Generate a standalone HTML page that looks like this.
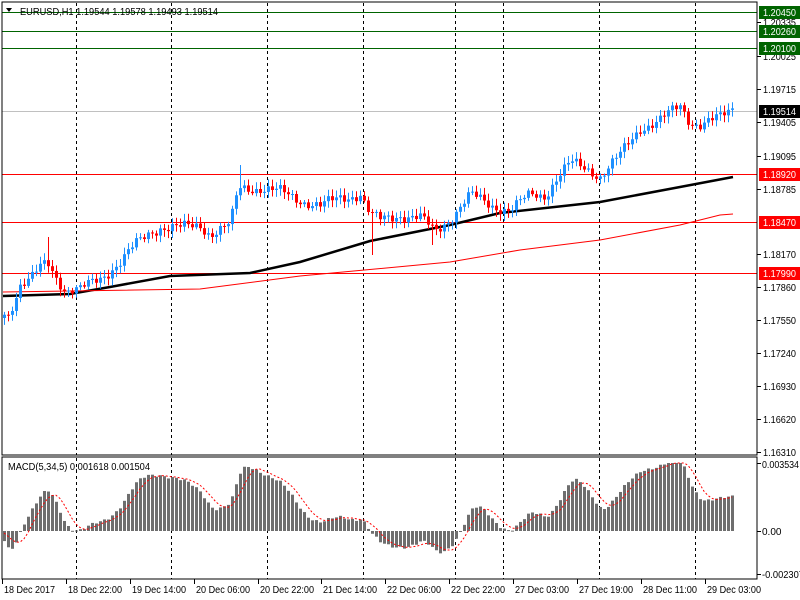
<!DOCTYPE html>
<html><head><meta charset="utf-8"><style>
html,body{margin:0;padding:0;background:#fff;width:800px;height:600px;overflow:hidden}
svg{display:block}
text{font-family:"Liberation Sans",sans-serif;font-size:10px;fill:#000}
</style></head><body>
<svg id="s" width="800" height="600" xmlns="http://www.w3.org/2000/svg">
<rect x="0" y="0" width="800" height="600" fill="#fff"/>
<g id="g"></g>
<rect x="2" y="2" width="755" height="453" fill="none" stroke="#000" stroke-width="1"/>
<rect x="2" y="457" width="755" height="122" fill="none" stroke="#000" stroke-width="1"/>
<text x="20" y="15" textLength="198" lengthAdjust="spacingAndGlyphs">EURUSD,H1  1.19544 1.19578 1.19493 1.19514</text>
<path d="M6 8 L12 8 L9 12 Z" fill="#000"/>
<text x="8" y="470" textLength="142" lengthAdjust="spacingAndGlyphs">MACD(5,34,5) 0.001618 0.001504</text>
</svg>
<script>
var g=document.getElementById('g'),h='';
function L(x1,y1,x2,y2,c,w,d){h+='<line x1="'+x1+'" y1="'+y1+'" x2="'+x2+'" y2="'+y2+'" stroke="'+c+'" stroke-width="'+(w||1)+'"'+(d?' stroke-dasharray="'+d+'"':'')+'/>';}
function R(x,y,w,hh,c){h+='<rect x="'+x+'" y="'+y+'" width="'+w+'" height="'+hh+'" fill="'+c+'"/>';}
function T(x,y,t,c,len){h+='<text x="'+x+'" y="'+y+'"'+(c?' style="fill:'+c+'"':'')+(len?' textLength="'+len+'" lengthAdjust="spacingAndGlyphs"':'')+'>'+t+'</text>';}
[76,171,267,363,455,503,599,695].forEach(function(x){L(x+.5,3,x+.5,455,'#000',1,'3,3');L(x+.5,458,x+.5,579,'#000',1,'3,3');});
[[12,'#006400'],[31,'#006400'],[48,'#006400'],[174,'#f00'],[222,'#f00'],[273,'#f00']].forEach(function(l){L(2,l[0]+.5,757,l[0]+.5,l[1],1);});
L(2,111.5,757,111.5,'#c0c0c0',1);
var K=[[2,312],[8,314],[20,285],[30,280],[40,268],[47,262],[55,275],[65,290],[80,290],[100,278],[120,262],[135,245],[150,232],[160,227],[180,228],[200,225],[210,234],[230,225],[238,188],[260,188],[280,192],[300,200],[320,206],[340,198],[360,194],[370,215],[380,220],[400,215],[420,218],[435,232],[450,218],[470,195],[490,205],[510,210],[530,195],[545,195],[555,180],[570,163],[590,170],[600,176],[620,155],[640,128],[660,120],[680,106],[690,122],[700,124],[720,118],[733,108]];
function interp(x){for(var i=0;i<K.length-1;i++){if(x<=K[i+1][0]){var t=(x-K[i][0])/(K[i+1][0]-K[i][0]);return K[i][1]+t*(K[i+1][1]-K[i][1]);}}return K[K.length-1][1];}
var xs=[],cl=[];for(var x=4;x<=733;x+=4){xs.push(x);cl.push(interp(x)+4*Math.sin(x*1.7)+3*Math.sin(x*0.53+1));}
function poly(P,c,w){h+='<polyline fill="none" stroke="'+c+'" stroke-width="'+w+'" points="'+P.map(function(p){return p.join(',')}).join(' ')+'"/>';}
poly([[3,296],[70,294],[110,287],[170,276],[250,273],[300,262],[370,241],[450,225],[500,213],[600,202],[680,187],[733,177]],'#000',2.5);
poly([[3,292],[200,289],[300,276],[450,262],[520,250],[600,240],[680,225],[720,215],[733,214]],'#f00',1);
var prev=318;
for(var i=0;i<xs.length;i++){var o=prev,c=cl[i],x=xs[i];var hi=Math.min(o,c)-2-Math.abs(5*Math.sin(x*3.1)),lo=Math.max(o,c)+2+Math.abs(5*Math.cos(x*2.3));
if(x==48)hi=237;if(x==240)hi=165;if(x==372)lo=255;if(x==432)lo=245;
var col=c<=o?'#1e90ff':'#f00';L(x+.5,hi,x+.5,lo,col,1);var t=Math.min(o,c),b=Math.max(o,c);if(b-t<1)b=t+1;R(x-1,t,3,b-t,col);prev=c;}
var data=[];for(var k=0;k<34;k++)data.push(296);data=data.concat(cl);
function ema(a,n){var r=[],al=2/(n+1),e=a[0];for(var i=0;i<a.length;i++){e=i?e+al*(a[i]-e):a[i];r.push(e);}return r;}
var e5=ema(data,5),e34=ema(data,34),m=[];for(var i=0;i<data.length;i++)m.push((e34[i]-e5[i])*1.95);
var sig=[];for(var i=0;i<m.length;i++){var s=0,n=0;for(var j=Math.max(0,i-4);j<=i;j++){s+=m[j];n++;}sig.push(s/n);}
var sp=[];for(var i=0;i<xs.length;i++){var v=m[i+34],y=531-v;y=Math.max(463,Math.min(578,y));R(xs[i]-1,Math.min(y,531),3,Math.max(1,Math.abs(531-y)),'#6e6e6e');sp.push([xs[i],Math.max(463,531-sig[i+34])]);}
h+='<polyline fill="none" stroke="#f00" stroke-width="1" stroke-dasharray="2,2" points="'+sp.map(function(p){return p.join(',')}).join(' ')+'"/>';
[[1.20335,22],[1.20025,56],[1.19715,89],[1.19405,122],[1.19095,156],[1.18785,189],[1.18170,254],[1.17860,287],[1.17550,320],[1.17240,353],[1.16930,386],[1.16620,419],[1.16310,452]].forEach(function(p){L(757,p[1]+.5,761,p[1]+.5,'#000');T(763,p[1]+4,p[0].toFixed(5),0,33);});
[[1.20450,12,'#006400'],[1.20260,31,'#006400'],[1.20100,48,'#006400'],[1.19514,111,'#000'],[1.18920,174,'#f00'],[1.18470,222,'#f00'],[1.17990,273,'#f00']].forEach(function(p){R(759,p[1]-6,41,13,p[2]);T(763,p[1]+4,p[0].toFixed(5),'#fff',33);});
L(757,463.5,761,463.5,'#000');T(762,468,'0.003534',0,37);L(757,531.5,761,531.5,'#000');T(762,535,'0.00');L(757,574.5,761,574.5,'#000');T(762,578,'-0.002307',0,42);
[['18 Dec 2017',3,51],['18 Dec 22:00',67,54],['19 Dec 14:00',131,54],['20 Dec 06:00',195,54],['20 Dec 22:00',259,54],['21 Dec 14:00',322,54],['22 Dec 06:00',386,54],['22 Dec 22:00',450,54],['27 Dec 03:00',514,54],['27 Dec 19:00',578,54],['28 Dec 11:00',642,54],['29 Dec 03:00',706,54]].forEach(function(p){L(p[1]-.5,579,p[1]-.5,584,'#000');T(p[1]+1,593,p[0],0,p[2]);});
g.innerHTML=h;
</script>
</body></html>
